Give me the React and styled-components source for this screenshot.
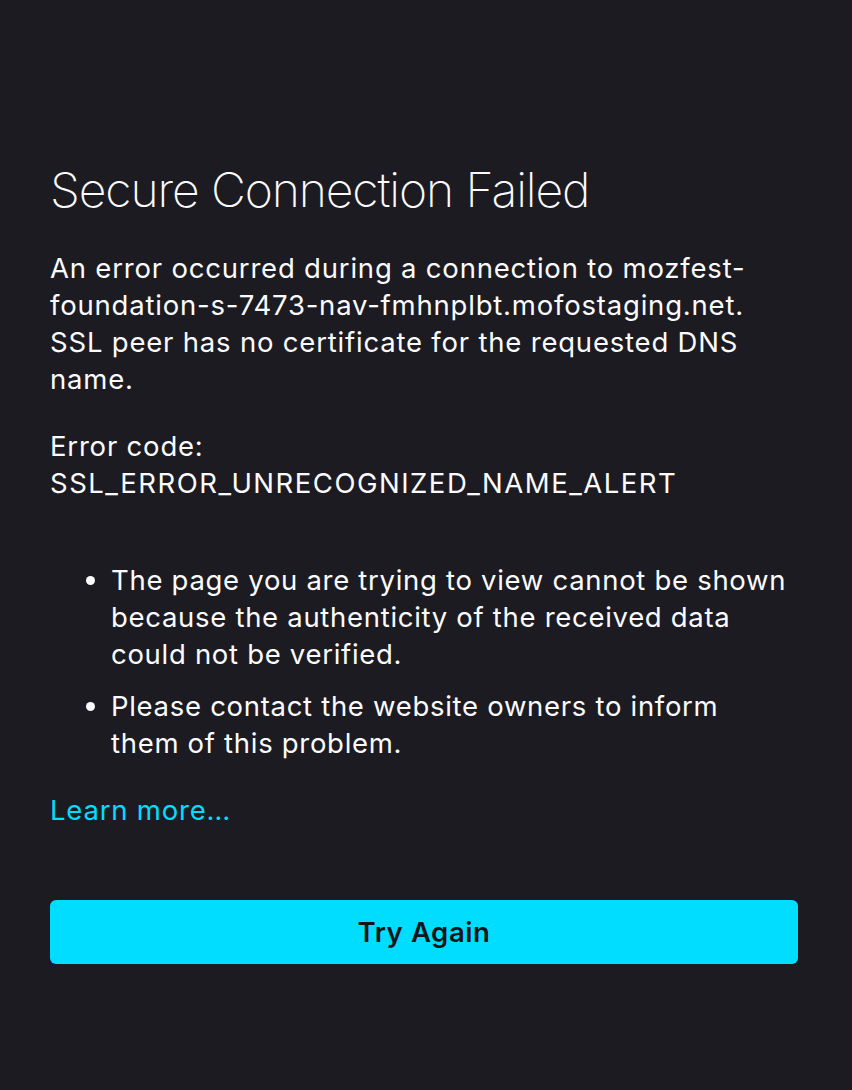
import styled, { createGlobalStyle } from "styled-components";

const GlobalStyle = createGlobalStyle`
  html, body {
    margin: 0;
    padding: 0;
    background: #1c1b22;
  }
  * {
    box-sizing: border-box;
  }
`;

const Page = styled.div`
  min-height: 100vh;
  background: #1c1b22;
  color: #fbfbfe;
  font-family: Inter, "Noto Sans", sans-serif;
  font-size: 27.5px;
  line-height: 37px;
  letter-spacing: 0.8px;
  padding: 160px 54px 0 50px;
`;

const Title = styled.h1`
  margin: 0 0 30px;
  font-size: 48px;
  font-weight: 200;
  line-height: 60px;
  letter-spacing: -1.1px;
`;

const Text = styled.p`
  margin: 0 0 ${(props) => props.$gap ?? 30}px;
`;

const Code = styled.span`
  letter-spacing: 1.5px;
`;

const List = styled.ul`
  margin: 60px 0 30px;
  padding-left: 61px;
`;

const Item = styled.li`
  letter-spacing: 0.7px;

  & + & {
    margin-top: 15px;
  }
`;

const Link = styled.a`
  display: inline-block;
  color: #00ddff;
  text-decoration: none;
`;

const Button = styled.button`
  display: block;
  width: 100%;
  height: 64px;
  margin-top: 71px;
  border: none;
  border-radius: 6px;
  background: #00ddff;
  color: #15141a;
  font-family: inherit;
  font-size: 27.5px;
  font-weight: 600;
  letter-spacing: 0.6px;
`;

export default function App() {
  return (
    <>
      <GlobalStyle />
      <Page>
        <Title>Secure Connection Failed</Title>
        <Text>
          An error occurred during a connection to mozfest-
          <br />
          foundation-s-7473-nav-fmhnplbt.mofostaging.net.
          <br />
          SSL peer has no certificate for the requested DNS
          <br />
          name.
        </Text>
        <Text $gap={0}>
          Error code:
          <br />
          <Code>SSL_ERROR_UNRECOGNIZED_NAME_ALERT</Code>
        </Text>
        <List>
          <Item>
            The page you are trying to view cannot be shown
            <br />
            because the authenticity of the received data
            <br />
            could not be verified.
          </Item>
          <Item>
            Please contact the website owners to inform
            <br />
            them of this problem.
          </Item>
        </List>
        <Link href="#">Learn more…</Link>
        <Button>Try Again</Button>
      </Page>
    </>
  );
}
